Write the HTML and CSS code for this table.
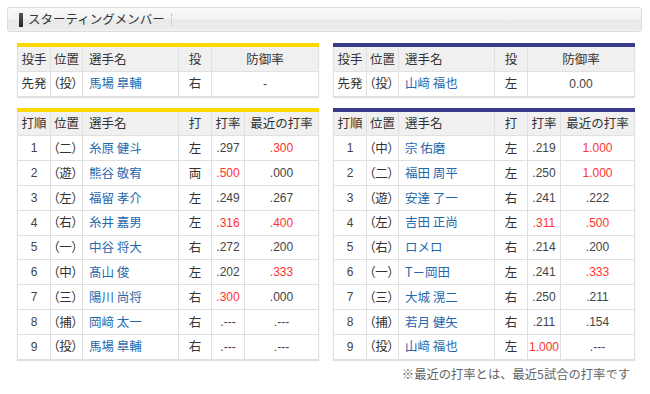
FILE: index.html
```html
<!DOCTYPE html>
<html lang="ja">
<head>
<meta charset="utf-8">
<link rel="stylesheet" href="styles.css">
</head>
<body>
<div class="page">
  <div class="heading">
    <span class="marker"></span>
    <span class="title">スターティングメンバー</span>
    <span class="sep"></span>
  </div>
  <div class="grid">
    <table class="tbl home pitch">
      <colgroup><col class="c1"><col class="c2"><col class="c3"><col class="c4"><col class="c5w"></colgroup>
      <tr class="head"><th>投手</th><th>位置</th><th class="name">選手名</th><th>投</th><th>防御率</th></tr>
      <tr><td>先発</td><td class="pos">（投）</td><td class="name"><a>馬場 皐輔</a></td><td>右</td><td class="num">-</td></tr>
    </table>
    <table class="tbl away pitch">
      <colgroup><col class="c1"><col class="c2"><col class="c3"><col class="c4"><col class="c5w"></colgroup>
      <tr class="head"><th>投手</th><th>位置</th><th class="name">選手名</th><th>投</th><th>防御率</th></tr>
      <tr><td>先発</td><td class="pos">（投）</td><td class="name"><a>山﨑 福也</a></td><td>左</td><td class="num">0.00</td></tr>
    </table>
    <table class="tbl home">
      <colgroup><col class="c1"><col class="c2"><col class="c3"><col class="c4"><col class="c5"><col class="c6"></colgroup>
      <tr class="head"><th>打順</th><th>位置</th><th class="name">選手名</th><th>打</th><th>打率</th><th>最近の打率</th></tr>
      <tr><td class="num">1</td><td class="pos">（二）</td><td class="name"><a>糸原 健斗</a></td><td>左</td><td class="num">.297</td><td class="num red">.300</td></tr>
      <tr><td class="num">2</td><td class="pos">（遊）</td><td class="name"><a>熊谷 敬宥</a></td><td>両</td><td class="num red">.500</td><td class="num">.000</td></tr>
      <tr><td class="num">3</td><td class="pos">（左）</td><td class="name"><a>福留 孝介</a></td><td>左</td><td class="num">.249</td><td class="num">.267</td></tr>
      <tr><td class="num">4</td><td class="pos">（右）</td><td class="name"><a>糸井 嘉男</a></td><td>左</td><td class="num red">.316</td><td class="num red">.400</td></tr>
      <tr><td class="num">5</td><td class="pos">（一）</td><td class="name"><a>中谷 将大</a></td><td>右</td><td class="num">.272</td><td class="num">.200</td></tr>
      <tr><td class="num">6</td><td class="pos">（中）</td><td class="name"><a>髙山 俊</a></td><td>左</td><td class="num">.202</td><td class="num red">.333</td></tr>
      <tr><td class="num">7</td><td class="pos">（三）</td><td class="name"><a>陽川 尚将</a></td><td>右</td><td class="num red">.300</td><td class="num">.000</td></tr>
      <tr><td class="num">8</td><td class="pos">（捕）</td><td class="name"><a>岡﨑 太一</a></td><td>右</td><td class="num">.---</td><td class="num">.---</td></tr>
      <tr><td class="num">9</td><td class="pos">（投）</td><td class="name"><a>馬場 皐輔</a></td><td>右</td><td class="num">.---</td><td class="num">.---</td></tr>
    </table>
    <div class="right">
      <table class="tbl away">
        <colgroup><col class="c1"><col class="c2"><col class="c3"><col class="c4"><col class="c5"><col class="c6"></colgroup>
        <tr class="head"><th>打順</th><th>位置</th><th class="name">選手名</th><th>打</th><th>打率</th><th>最近の打率</th></tr>
        <tr><td class="num">1</td><td class="pos">（中）</td><td class="name"><a>宗 佑磨</a></td><td>左</td><td class="num">.219</td><td class="num red">1.000</td></tr>
        <tr><td class="num">2</td><td class="pos">（二）</td><td class="name"><a>福田 周平</a></td><td>左</td><td class="num">.250</td><td class="num red">1.000</td></tr>
        <tr><td class="num">3</td><td class="pos">（遊）</td><td class="name"><a>安達 了一</a></td><td>右</td><td class="num">.241</td><td class="num">.222</td></tr>
        <tr><td class="num">4</td><td class="pos">（左）</td><td class="name"><a>吉田 正尚</a></td><td>左</td><td class="num red">.311</td><td class="num red">.500</td></tr>
        <tr><td class="num">5</td><td class="pos">（右）</td><td class="name"><a>ロメロ</a></td><td>右</td><td class="num">.214</td><td class="num">.200</td></tr>
        <tr><td class="num">6</td><td class="pos">（一）</td><td class="name"><a>T－岡田</a></td><td>左</td><td class="num">.241</td><td class="num red">.333</td></tr>
        <tr><td class="num">7</td><td class="pos">（三）</td><td class="name"><a>大城 滉二</a></td><td>右</td><td class="num">.250</td><td class="num">.211</td></tr>
        <tr><td class="num">8</td><td class="pos">（捕）</td><td class="name"><a>若月 健矢</a></td><td>右</td><td class="num">.211</td><td class="num">.154</td></tr>
        <tr><td class="num">9</td><td class="pos">（投）</td><td class="name"><a>山﨑 福也</a></td><td>左</td><td class="num red">1.000</td><td class="num">.---</td></tr>
      </table>
      <p class="note">※最近の打率とは、最近5試合の打率です</p>
    </div>
  </div>
</div>
</body>
</html>
```

FILE: styles.css
```css
html, body {
  margin: 0;
  padding: 0;
  background: #fff;
}
body {
  font-family: "Noto Sans CJK JP", "Noto Sans", sans-serif;
  color: #333;
}
.page {
  padding: 7px 8px 0 7px;
}
.heading {
  box-sizing: border-box;
  height: 25px;
  width: 635px;
  border: 1px solid #dcdcdc;
  border-radius: 3px;
  background: linear-gradient(to bottom, #f9f9f9 0%, #f2f2f2 48%, #e8e8e8 55%, #ececec 90%, #f3f3f3 100%);
  display: flex;
  align-items: center;
  padding-left: 11px;
}
.marker {
  width: 4px;
  height: 14px;
  background: linear-gradient(to bottom, #555, #222);
  margin-right: 5px;
}
.title {
  font-size: 12.5px;
  color: #333;
  line-height: 1;
}
.sep {
  width: 0;
  height: 12px;
  border-left: 1px dotted #bbb;
  margin-left: 6px;
}
.grid {
  display: grid;
  grid-template-columns: 301px 301px;
  column-gap: 15px;
  row-gap: 11px;
  margin: 11px 0 0 10px;
  align-items: start;
}
.tbl {
  border-collapse: collapse;
  width: 301px;
  table-layout: fixed;
  font-size: 12.5px;
  box-shadow: 0 1px 1px rgba(0,0,0,0.12);
}
.tbl.home { border-top: 4px solid #ffd800; }
.tbl.away { border-top: 4px solid #3a3a8c; }
.tbl th, .tbl td {
  border: 1px solid #e0e0e0;
  height: 23.8px;
  padding: 0;
  text-align: center;
  font-weight: normal;
  white-space: nowrap;
  line-height: 1;
}
.tbl tr.head th { background: #f0f0f0; }
.tbl .pos {
  font-feature-settings: "palt";
  text-align: left;
  padding-left: 2px;
}
.tbl .name { text-align: left; padding-left: 6px; }
.tbl a { color: #2468ad; text-decoration: none; }
.tbl .num {
  font-family: "Liberation Sans", Arial, sans-serif;
  font-size: 12px;
  color: #444;
}
.tbl .red { color: #ff3333; }
.c1 { width: 33px; }
.c2 { width: 32px; }
.c3 { width: 96px; }
.c4 { width: 33px; }
.c5 { width: 33px; }
.c6 { width: 74px; }
.c5w { width: 107px; }
.note {
  margin: 6px 4px 0 0;
  text-align: right;
  font-size: 12.3px;
  color: #666;
  line-height: 16px;
}
```
